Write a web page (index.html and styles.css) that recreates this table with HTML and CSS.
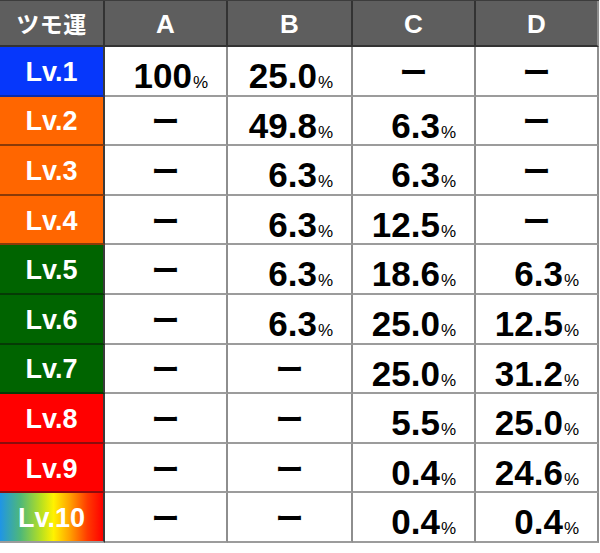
FILE: index.html
```html
<!DOCTYPE html>
<html lang="ja">
<head>
<meta charset="utf-8">
<link rel="stylesheet" href="styles.css">
</head>
<body>
<div class="table">
  <div class="cell head first">ツモ運</div>
  <div class="cell head">A</div>
  <div class="cell head">B</div>
  <div class="cell head">C</div>
  <div class="cell head last">D</div>

  <div class="cell lv blue">Lv.1</div>
  <div class="cell val">100<span class="pct">%</span></div>
  <div class="cell val">25.0<span class="pct">%</span></div>
  <div class="cell dash">ー</div>
  <div class="cell dash last">ー</div>

  <div class="cell lv orange">Lv.2</div>
  <div class="cell dash">ー</div>
  <div class="cell val">49.8<span class="pct">%</span></div>
  <div class="cell val">6.3<span class="pct">%</span></div>
  <div class="cell dash last">ー</div>

  <div class="cell lv orange">Lv.3</div>
  <div class="cell dash">ー</div>
  <div class="cell val">6.3<span class="pct">%</span></div>
  <div class="cell val">6.3<span class="pct">%</span></div>
  <div class="cell dash last">ー</div>

  <div class="cell lv orange">Lv.4</div>
  <div class="cell dash">ー</div>
  <div class="cell val">6.3<span class="pct">%</span></div>
  <div class="cell val">12.5<span class="pct">%</span></div>
  <div class="cell dash last">ー</div>

  <div class="cell lv green">Lv.5</div>
  <div class="cell dash">ー</div>
  <div class="cell val">6.3<span class="pct">%</span></div>
  <div class="cell val">18.6<span class="pct">%</span></div>
  <div class="cell val last">6.3<span class="pct">%</span></div>

  <div class="cell lv green">Lv.6</div>
  <div class="cell dash">ー</div>
  <div class="cell val">6.3<span class="pct">%</span></div>
  <div class="cell val">25.0<span class="pct">%</span></div>
  <div class="cell val last">12.5<span class="pct">%</span></div>

  <div class="cell lv green">Lv.7</div>
  <div class="cell dash">ー</div>
  <div class="cell dash">ー</div>
  <div class="cell val">25.0<span class="pct">%</span></div>
  <div class="cell val last">31.2<span class="pct">%</span></div>

  <div class="cell lv red">Lv.8</div>
  <div class="cell dash">ー</div>
  <div class="cell dash">ー</div>
  <div class="cell val">5.5<span class="pct">%</span></div>
  <div class="cell val last">25.0<span class="pct">%</span></div>

  <div class="cell lv red">Lv.9</div>
  <div class="cell dash">ー</div>
  <div class="cell dash">ー</div>
  <div class="cell val">0.4<span class="pct">%</span></div>
  <div class="cell val last">24.6<span class="pct">%</span></div>

  <div class="cell lv rainbow">Lv.10</div>
  <div class="cell dash">ー</div>
  <div class="cell dash">ー</div>
  <div class="cell val">0.4<span class="pct">%</span></div>
  <div class="cell val last">0.4<span class="pct">%</span></div>
</div>
</body>
</html>
```
FILE: styles.css
```css
html, body {
  margin: 0;
  padding: 0;
  background: #ffffff;
}

body {
  font-family: "Liberation Sans", Arial, "Noto Sans CJK JP", sans-serif;
}

.table {
  width: 599px;
  display: grid;
  grid-template-columns: 105px 123px 125px 123px 123px;
  grid-template-rows: 46px repeat(10, 49.6px);
  border-top: 1px solid #3c3c3c;
}

.cell {
  box-sizing: border-box;
  display: flex;
  align-items: center;
  border-right: 2px solid #8e8e8e;
  border-bottom: 2px solid #9c9c9c;
}

.head {
  background: #5e5e5e;
  color: #ffffff;
  font-weight: 700;
  font-size: 26px;
  justify-content: center;
  border-right-color: #333333;
  border-bottom-color: #333333;
  padding-top: 2px;
}

.head.first {
  font-family: "Noto Sans CJK JP", sans-serif;
  font-size: 23px;
  letter-spacing: 0.5px;
  padding-top: 0;
}

.lv {
  color: #ffffff;
  font-weight: 700;
  font-size: 27px;
  justify-content: center;
  border-right-color: #3a3a3a;
  padding-top: 3px;
}

.blue { background: #0637fb; border-bottom-color: #0b2aa8; }
.orange { background: #ff6600; border-bottom-color: #8a3a08; }
.green { background: #006400; border-bottom-color: #053a05; }
.red { background: #ff0000; border-bottom-color: #8c0c0c; }
.rainbow {
  background: linear-gradient(90deg, #1f95e6 0%, #4fb878 20%, #b8e020 40%, #fff200 52%, #ffa000 68%, #ff3a00 85%, #ff0000 100%);
  border-bottom-color: #9c9c9c;
}

.val {
  justify-content: flex-end;
  align-items: baseline;
  padding-right: 18px;
  padding-top: 9px;
  font-weight: 700;
  font-size: 35px;
  color: #000000;
}

.pct {
  font-size: 17px;
  font-weight: 400;
  margin-left: 1px;
}

.dash {
  justify-content: center;
  font-family: "Noto Sans CJK JP", sans-serif;
  font-weight: 700;
  font-size: 28px;
  color: #000000;
}

.last {
  border-right-color: #8e8e8e;
}
```
